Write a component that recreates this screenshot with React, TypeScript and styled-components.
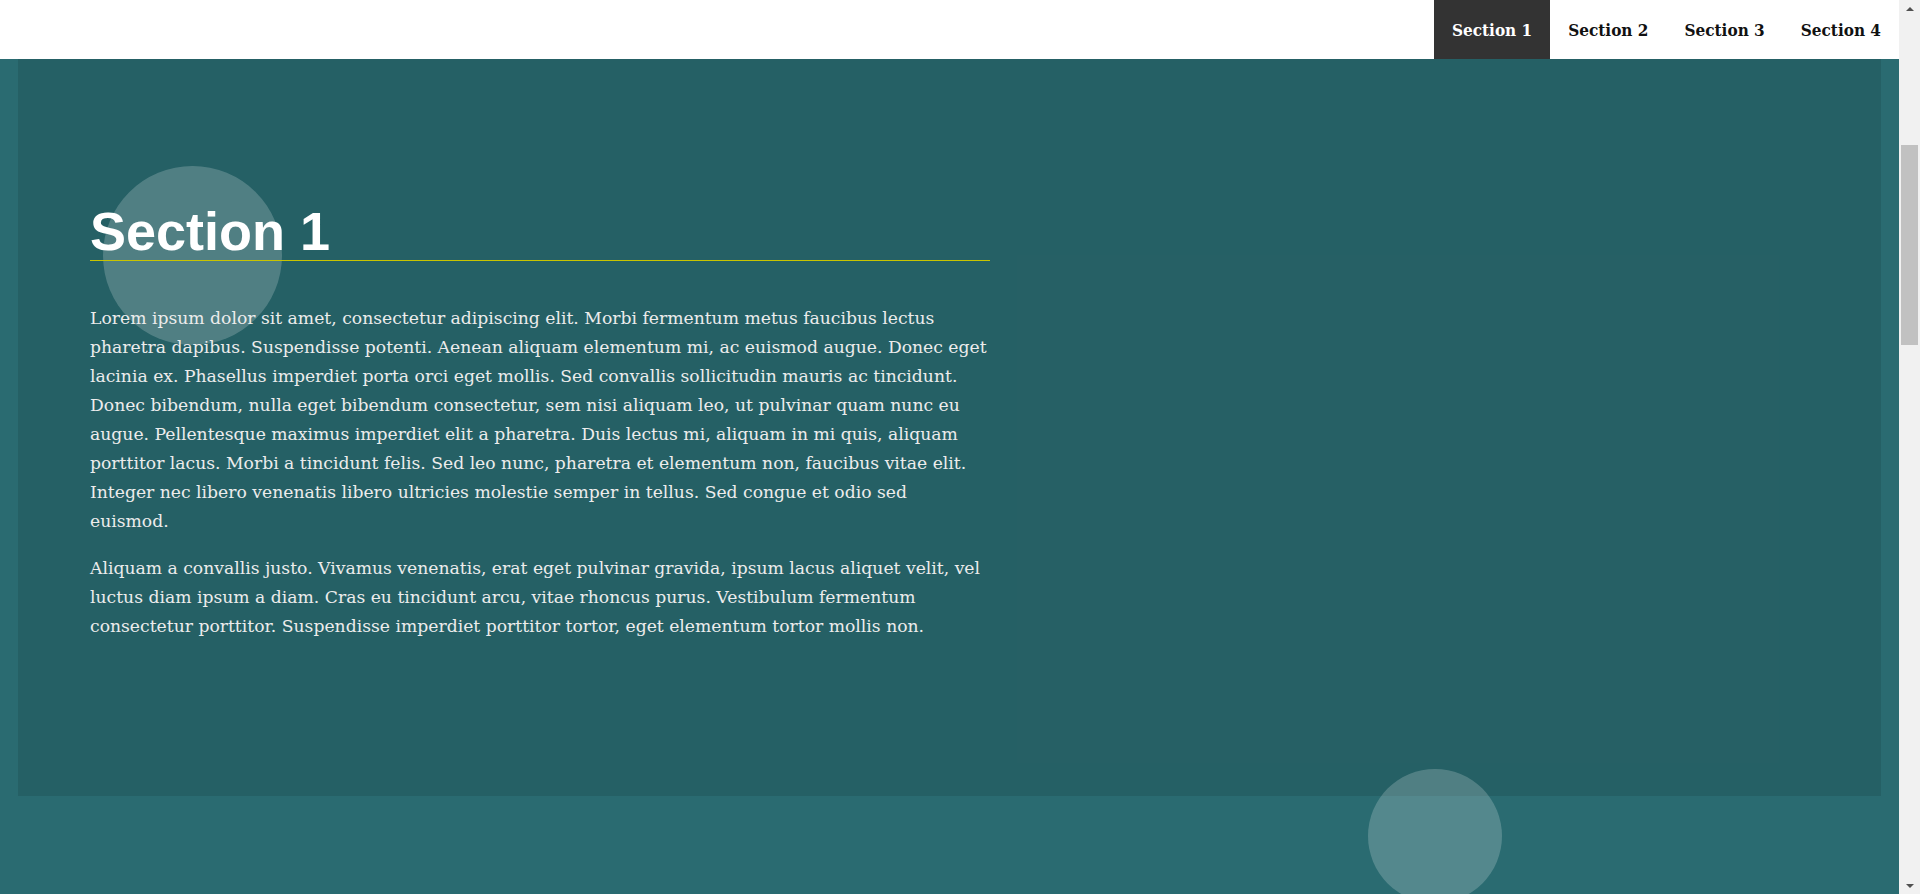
import React from 'react';
import styled, { createGlobalStyle } from 'styled-components';

const GlobalStyle = createGlobalStyle`
  body {
    margin: 0;
    background: #2a6b71;
    font-family: "DejaVu Serif", "Liberation Serif", serif;
  }
  * {
    box-sizing: border-box;
  }
`;

const Frame = styled.div`
  display: flex;
  height: 100vh;
  overflow: hidden;
`;

const Viewport = styled.div`
  flex: 1;
  overflow: hidden;
`;

const Header = styled.header`
  background: #fff;
  height: 59px;
  display: flex;
  justify-content: flex-end;
`;

const NavList = styled.ul`
  display: flex;
  margin: 0;
  padding: 0;
  list-style: none;
`;

const NavItem = styled.li<{ $active?: boolean }>`
  display: flex;
  align-items: center;
  padding: 0 18px;
  font-family: "DejaVu Serif Condensed", "DejaVu Serif", serif;
  font-stretch: condensed;
  font-size: 17px;
  font-weight: bold;
  color: ${(p) => (p.$active ? '#fff' : '#111')};
  background: ${(p) => (p.$active ? '#333' : 'transparent')};
  cursor: pointer;
`;

const Main = styled.main`
  position: relative;
  padding: 0 18px;
`;

const Panel = styled.section`
  background: rgba(0, 0, 0, 0.1);
  height: 737px;
  padding: 145px 0 0 72px;
`;

const Content = styled.div`
  position: relative;
  z-index: 1;
  width: 900px;
`;

const Title = styled.h1`
  margin: 0;
  padding-bottom: 2px;
  font-family: "Liberation Sans", Arial, sans-serif;
  font-size: 54px;
  line-height: 1;
  font-weight: bold;
  color: #fff;
  border-bottom: 1px solid #c9c400;
`;

const Text = styled.p`
  margin: 18px 0 0;
  font-size: 17.2px;
  line-height: 29px;
  color: #ececec;

  &:first-of-type {
    margin-top: 43px;
  }
`;

const Bubble = styled.div<{ $x: number; $y: number; $size: number }>`
  position: absolute;
  left: ${(p) => p.$x}px;
  top: ${(p) => p.$y}px;
  width: ${(p) => p.$size}px;
  height: ${(p) => p.$size}px;
  border-radius: 50%;
  background: rgba(255, 255, 255, 0.2);
  pointer-events: none;
`;

const Scrollbar = styled.div`
  width: 21px;
  background: #f1f1f1;
  display: flex;
  flex-direction: column;
  align-items: center;
`;

const Arrow = styled.div<{ $down?: boolean }>`
  height: 17px;
  display: flex;
  align-items: center;
  justify-content: center;
  flex-shrink: 0;

  &::before {
    content: '';
    border-left: 4px solid transparent;
    border-right: 4px solid transparent;
    ${(p) => (p.$down ? 'border-top: 4px solid #505050;' : 'border-bottom: 4px solid #505050;')}
  }
`;

const Track = styled.div`
  flex: 1;
  padding-top: 128px;
`;

const Thumb = styled.div`
  width: 17px;
  height: 200px;
  background: #c1c1c1;
`;

const sections = ['Section 1', 'Section 2', 'Section 3', 'Section 4'];

export default function App() {
  return (
    <>
      <GlobalStyle />
      <Frame>
        <Viewport>
          <Header>
            <NavList>
              {sections.map((s, i) => (
                <NavItem key={s} $active={i === 0}>
                  {s}
                </NavItem>
              ))}
            </NavList>
          </Header>
          <Main>
            <Bubble $x={103} $y={107} $size={179} />
            <Bubble $x={1368} $y={710} $size={134} />
            <Panel>
              <Content>
                <Title>Section 1</Title>
                <Text>
                  Lorem ipsum dolor sit amet, consectetur adipiscing elit. Morbi fermentum metus faucibus lectus
                  pharetra dapibus. Suspendisse potenti. Aenean aliquam elementum mi, ac euismod augue. Donec eget
                  lacinia ex. Phasellus imperdiet porta orci eget mollis. Sed convallis sollicitudin mauris ac tincidunt.
                  Donec bibendum, nulla eget bibendum consectetur, sem nisi aliquam leo, ut pulvinar quam nunc eu
                  augue. Pellentesque maximus imperdiet elit a pharetra. Duis lectus mi, aliquam in mi quis, aliquam
                  porttitor lacus. Morbi a tincidunt felis. Sed leo nunc, pharetra et elementum non, faucibus vitae elit.
                  Integer nec libero venenatis libero ultricies molestie semper in tellus. Sed congue et odio sed
                  euismod.
                </Text>
                <Text>
                  Aliquam a convallis justo. Vivamus venenatis, erat eget pulvinar gravida, ipsum lacus aliquet velit, vel
                  luctus diam ipsum a diam. Cras eu tincidunt arcu, vitae rhoncus purus. Vestibulum fermentum
                  consectetur porttitor. Suspendisse imperdiet porttitor tortor, eget elementum tortor mollis non.
                </Text>
              </Content>
            </Panel>
          </Main>
        </Viewport>
        <Scrollbar>
          <Arrow />
          <Track>
            <Thumb />
          </Track>
          <Arrow $down />
        </Scrollbar>
      </Frame>
    </>
  );
}
